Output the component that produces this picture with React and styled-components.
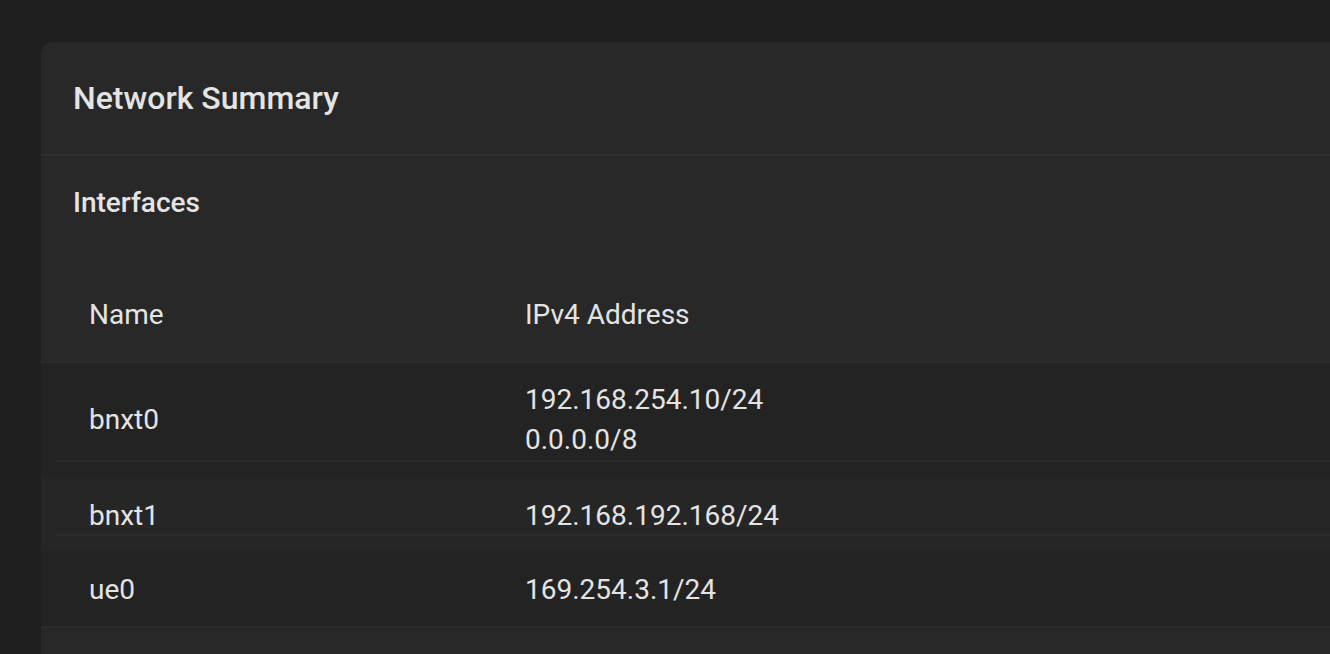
import React from "react";
import styled, { createGlobalStyle } from "styled-components";

const Global = createGlobalStyle`
  html, body { margin: 0; padding: 0; background: #1f1f1f; overflow: hidden; }
  body { font-family: Roboto, "Noto Sans", sans-serif; color: #e4e4e4; }
`;

const Page = styled.div`
  padding: 42px 0 0 41px;
  height: 654px;
  box-sizing: border-box;
`;

const Card = styled.section`
  background: #282828;
  border-radius: 12px 0 0 0;
  margin-right: -40px;
  padding-bottom: 80px;
`;

const CardHeader = styled.header`
  height: 112px;
  display: flex;
  align-items: center;
  padding: 0 32px;
  border-bottom: 2px solid #303030;
`;

const Title = styled.h1`
  margin: 0;
  font-size: 32px;
  font-weight: 500;
`;

const SectionTitle = styled.h2`
  margin: 0;
  height: 92px;
  display: flex;
  align-items: center;
  padding: 0 32px;
  font-size: 28px;
  font-weight: 500;
`;

const Grid = styled.div`
  display: grid;
  grid-template-columns: 436px 1fr;
  padding-left: 48px;
  font-size: 28px;
  font-weight: 400;
`;

const HeadRow = styled(Grid)`
  margin-top: 20px;
  height: 94px;
  align-items: center;
  line-height: 36px;
  border-bottom: 1px solid #2e2e2e;
`;

const Row = styled.div`
  background: ${(p) => p.$bg};
`;

const RowBody = styled(Grid)`
  align-items: center;
  line-height: ${(p) => p.$lh}px;
  padding-top: ${(p) => p.$top}px;
  padding-bottom: ${(p) => p.$bottom}px;
`;

const Divider = styled.div`
  height: 2px;
  background: #2c2c2c;
  margin-left: ${(p) => (p.$full ? 0 : 16)}px;
`;

const Spacer = styled.div`
  height: ${(p) => p.$h}px;
`;

const Cell = styled.div`
  display: flex;
  flex-direction: column;
`;

const rows = [
  { name: "bnxt0", ips: ["192.168.254.10/24", "0.0.0.0/8"], bg: "#232323", lh: 40, top: 17, bottom: 0, spacer: 15 },
  { name: "bnxt1", ips: ["192.168.192.168/24"], bg: "#262626", lh: 36, top: 21, bottom: 0, spacer: 15 },
  { name: "ue0", ips: ["169.254.3.1/24"], bg: "#232323", lh: 36, top: 21, bottom: 18, spacer: 0, full: true },
];

export default function App() {
  return (
    <>
      <Global />
      <Page>
        <Card>
          <CardHeader>
            <Title>Network Summary</Title>
          </CardHeader>
          <SectionTitle>Interfaces</SectionTitle>
          <HeadRow>
            <div>Name</div>
            <div>IPv4 Address</div>
          </HeadRow>
          {rows.map((r) => (
            <Row key={r.name} $bg={r.bg}>
              <RowBody $lh={r.lh} $top={r.top} $bottom={r.bottom}>
                <div>{r.name}</div>
                <Cell>
                  {r.ips.map((ip) => (
                    <span key={ip}>{ip}</span>
                  ))}
                </Cell>
              </RowBody>
              <Divider $full={r.full} />
              {r.spacer > 0 && <Spacer $h={r.spacer} />}
            </Row>
          ))}
        </Card>
      </Page>
    </>
  );
}
